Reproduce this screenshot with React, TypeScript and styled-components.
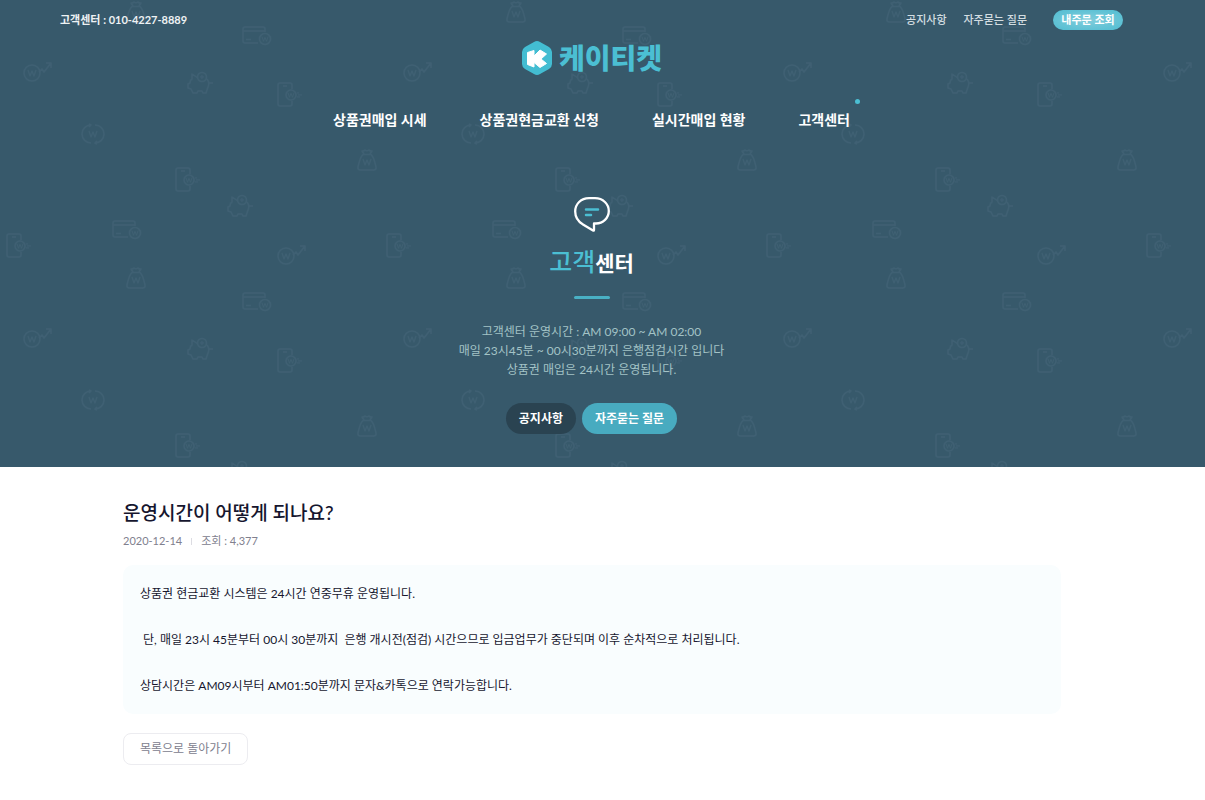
import React from "react";
import styled, { createGlobalStyle } from "styled-components";

const GlobalStyle = createGlobalStyle`
  * { box-sizing: border-box; }
  body {
    margin: 0;
    background: #fff;
    color: #16162e;
    font-family: Lato, "Noto Sans CJK KR", sans-serif;
    font-size: 12px;
  }
  a { color: inherit; text-decoration: none; }
  h1, h2, p, ul { margin: 0; padding: 0; }
`;

const Hero = styled.div`
  position: relative;
  background: #37596b;
  color: #fff;
  padding: 10px 82px 33px 60px;
`;

const PatternLayer = styled.svg`
  position: absolute;
  inset: 0;
  width: 100%;
  height: 100%;
`;

const HeroContent = styled.div`
  position: relative;
  display: flex;
  flex-direction: column;
  align-items: center;
`;

const TopBar = styled.div`
  align-self: stretch;
  display: flex;
  align-items: center;
  justify-content: space-between;
  height: 20px;
  font-size: 11px;
  line-height: 18px;
`;

const Phone = styled.p`
  font-weight: 700;
  color: #eef2f4;
`;

const TopLinks = styled.nav`
  display: flex;
  align-items: center;
  gap: 17px;
  font-weight: 500;
  color: #d3dde1;
`;

const OrderLink = styled.a`
  display: flex;
  align-items: center;
  justify-content: center;
  width: 70px;
  height: 20px;
  margin-left: 9px;
  border-radius: 10px;
  color: #fff;
  font-weight: 700;
  background: radial-gradient(ellipse at center, #82cddb 0%, #50bdd2 100%);
`;

const Logo = styled.a`
  display: flex;
  align-items: center;
  gap: 6px;
  height: 36px;
  margin-top: 10px;
  color: #4bbfd3;
  font-size: 28px;
  font-weight: 900;
  line-height: 36px;
`;

const MainNav = styled.nav`
  display: flex;
  gap: 53px;
  margin-top: 34px;
  font-size: 14px;
  font-weight: 700;
  line-height: 20px;
`;

const NavLink = styled.a<{ $active?: boolean }>`
  position: relative;
  &::after {
    content: "";
    display: ${(p) => (p.$active ? "block" : "none")};
    position: absolute;
    top: -11px;
    right: -10px;
    width: 5px;
    height: 5px;
    border-radius: 50%;
    background: #4bbfd3;
  }
`;

const BubbleIcon = styled.svg`
  display: block;
  margin-top: 67px;
`;

const HeroTitle = styled.h2`
  display: flex;
  align-items: baseline;
  margin-top: 9px;
  font-size: 21px;
  font-weight: 700;
  line-height: 40px;
`;

const TitleAccent = styled.span`
  color: #4bbfd3;
  font-size: 25px;
  font-weight: 500;
`;

const TitleBar = styled.span`
  width: 36px;
  height: 3px;
  margin-top: 13px;
  border-radius: 2px;
  background: #49b0c4;
`;

const Info = styled.p`
  margin-top: 23px;
  color: #a3c3c6;
  line-height: 19px;
  text-align: center;
`;

const Tabs = styled.nav`
  display: flex;
  gap: 6px;
  margin-top: 24px;
`;

const Tab = styled.a<{ $active?: boolean }>`
  padding: 0 13px;
  border-radius: 16px;
  background: ${(p) => (p.$active ? "#48abc0" : "#2a4351")};
  font-weight: 700;
  line-height: 31px;
`;

const Article = styled.main`
  padding: 32px 144px 32px 123px;
`;

const Heading = styled.h1`
  font-size: 19px;
  font-weight: 500;
  line-height: 28px;
`;

const Meta = styled.div`
  display: flex;
  align-items: center;
  gap: 9px;
  margin-top: 5px;
  color: #80808e;
  font-size: 11px;
  line-height: 18px;
`;

const Divider = styled.span`
  width: 1px;
  height: 7px;
  background: #dcdce2;
`;

const Body = styled.div`
  display: grid;
  gap: 23px;
  margin-top: 15px;
  padding: 17px;
  border-radius: 10px;
  background: #f9fdfe;
  line-height: 23px;
  white-space: pre-wrap;
`;

const BackLink = styled.a`
  display: inline-block;
  margin-top: 19px;
  padding: 0 16px;
  border: 1px solid #ececf0;
  border-radius: 8px;
  color: #80808e;
  line-height: 30px;
`;

type Spot = { x: number; y: number };

const WonSign = () => <path d="M-4-3l2 6 2-5 2 5 2-6" strokeWidth="1.200" />;

const Won = ({ x, y, r }: Spot & { r: number }) => (
  <g transform={`translate(${x} ${y})`}>
    <circle r={r} />
    <g transform={`scale(${r < 7 ? 0.75 : 1})`}>
      <WonSign />
    </g>
  </g>
);

const Bag = ({ x, y }: Spot) => (
  <g transform={`translate(${x} ${y})`}>
    <path d="M-4-6.500C-7-4-8 2-9 6q-.5 3 2.500 3h13q3 0 2.500-3C8 2 7-4 4-6.500zM-3-7l-2-3q2 .5 3-1 2 1.500 4 0 1 1.500 3 1l-2 3" />
    <g transform="translate(0 1)">
      <WonSign />
    </g>
  </g>
);

const Card = ({ x, y }: Spot) => (
  <g transform={`translate(${x} ${y})`}>
    <path d="M15 16H2q-2 0-2-2V2q0-2 2-2h18q2 0 2 2v3M0 4h22M3 12.500h5" />
    <Won x={22} y={12} r={5.5} />
  </g>
);

const Trend = ({ x, y }: Spot) => (
  <g transform={`translate(${x} ${y})`}>
    <Won x={0} y={0} r={8} />
    <path d="M7-1l3-3 2 3 7-9M14-10h5v5" />
  </g>
);

const Piggy = ({ x, y }: Spot) => (
  <g transform={`translate(${x} ${y})`}>
    <path d="M-1-5l-6-4v5q-2 1-2 4l-2 1v4l3 1 2 4h4l1-2h4l1 2h3l2-6q2-4-1-8M10 0h4" />
    <circle cx="3" cy="-6" r="4.500" />
    <path d="M3-8v4M1-6h4" strokeWidth="1" />
  </g>
);

const Mobile = ({ x, y }: Spot) => (
  <g transform={`translate(${x} ${y})`}>
    <path d="M14 6V2q0-2-2-2H2Q0 0 0 2v19q0 2 2 2h10q2 0 2-2v-3M5 3h4" />
    <path d="M19 10h2M20 12h4M19 14h3" strokeWidth="1" />
    <Won x={13} y={12} r={5} />
  </g>
);

const Exchange = ({ x, y }: Spot) => (
  <g transform={`translate(${x} ${y})`}>
    <path d="M-2 9A9 9 0 0 1-2-9l-2-1M-2-9l-2 2M2-9A9 9 0 0 1 2 9l2 1M2 9l2-2" />
    <WonSign />
  </g>
);

const HeroPattern = () => (
  <PatternLayer aria-hidden="true">
    <defs>
      <pattern id="money" width="380" height="266" patternUnits="userSpaceOnUse">
        <g fill="none" stroke="#3f6073" strokeWidth="1.500" strokeLinejoin="round">
          <Bag x={136} y={13} />
          <Card x={243} y={27} />
          <Trend x={32} y={73} />
          <Piggy x={199} y={83} />
          <Mobile x={278} y={83} />
          <Exchange x={93} y={134} />
          <Bag x={367} y={161} />
          <Mobile x={176} y={168} />
          <Piggy x={239} y={206} />
          <Card x={113} y={221} />
          <Mobile x={7} y={234} />
          <Trend x={286} y={256} />
        </g>
      </pattern>
    </defs>
    <rect width="100%" height="100%" fill="url(#money)" />
  </PatternLayer>
);

const App = () => (
  <>
    <GlobalStyle />
    <Hero>
      <HeroPattern />
      <HeroContent>
        <TopBar>
          <Phone>고객센터 : 010-4227-8889</Phone>
          <TopLinks>
            <a href="#notice">공지사항</a>
            <a href="#faq">자주묻는 질문</a>
            <OrderLink href="#order">내주문 조회</OrderLink>
          </TopLinks>
        </TopBar>
        <Logo href="#home">
          <svg width="32" height="36" viewBox="0 0 32 36" aria-hidden="true">
            <path
              d="M13 2q3-2 6 0l9 5q3 2 3 5v12q0 3-3 5l-9 5q-3 2-6 0l-9-5q-3-2-3-5V12q0-3 3-5z"
              fill="#43bdd2"
            />
            <path
              d="M6.500 12.500L13 10.500V16l6-6 6.500 4-5.500 5 5.500 4.500-6.500 4-6-5V27l-6.500-2.500z"
              fill="#fff"
              stroke="#fff"
              strokeLinejoin="round"
            />
          </svg>
          케이티켓
        </Logo>
        <MainNav>
          <NavLink href="#price">상품권매입 시세</NavLink>
          <NavLink href="#apply">상품권현금교환 신청</NavLink>
          <NavLink href="#status">실시간매입 현황</NavLink>
          <NavLink href="#center" $active>
            고객센터
          </NavLink>
        </MainNav>
        <BubbleIcon width="36" height="35" viewBox="0 0 36 35" fill="none" aria-hidden="true">
          <path
            d="M15 1.200h6C29 1.200 34.800 7 34.800 14S29 26.500 22 26.500h-2V33q0 1-1 .5L9 27.500C4 24.500 1.200 20 1.200 14.500 1.200 7 7 1.200 15 1.200z"
            stroke="#fff"
            strokeWidth="2.300"
            strokeLinejoin="round"
          />
          <path d="M12 12.500h12M12 18h5" stroke="#4bbfd3" strokeWidth="2.500" strokeLinecap="round" />
        </BubbleIcon>
        <HeroTitle>
          <TitleAccent>고객</TitleAccent>센터
        </HeroTitle>
        <TitleBar />
        <Info>
          고객센터 운영시간 : AM 09:00 ~ AM 02:00
          <br />
          매일 23시45분 ~ 00시30분까지 은행점검시간 입니다
          <br />
          상품권 매입은 24시간 운영됩니다.
        </Info>
        <Tabs>
          <Tab href="#notice">공지사항</Tab>
          <Tab href="#faq" $active>
            자주묻는 질문
          </Tab>
        </Tabs>
      </HeroContent>
    </Hero>
    <Article>
      <Heading>운영시간이 어떻게 되나요?</Heading>
      <Meta>
        <span>2020-12-14</span>
        <Divider />
        <span>조회 : 4,377</span>
      </Meta>
      <Body>
        <p>상품권 현금교환 시스템은 24시간 연중무휴 운영됩니다.</p>
        <p>{" 단, 매일 23시 45분부터 00시 30분까지  은행 개시전(점검) 시간으므로 입금업무가 중단되며 이후 순차적으로 처리됩니다."}</p>
        <p>상담시간은 AM09시부터 AM01:50분까지 문자&amp;카톡으로 연락가능합니다.</p>
      </Body>
      <BackLink href="#list">목록으로 돌아가기</BackLink>
    </Article>
  </>
);

export default App;
